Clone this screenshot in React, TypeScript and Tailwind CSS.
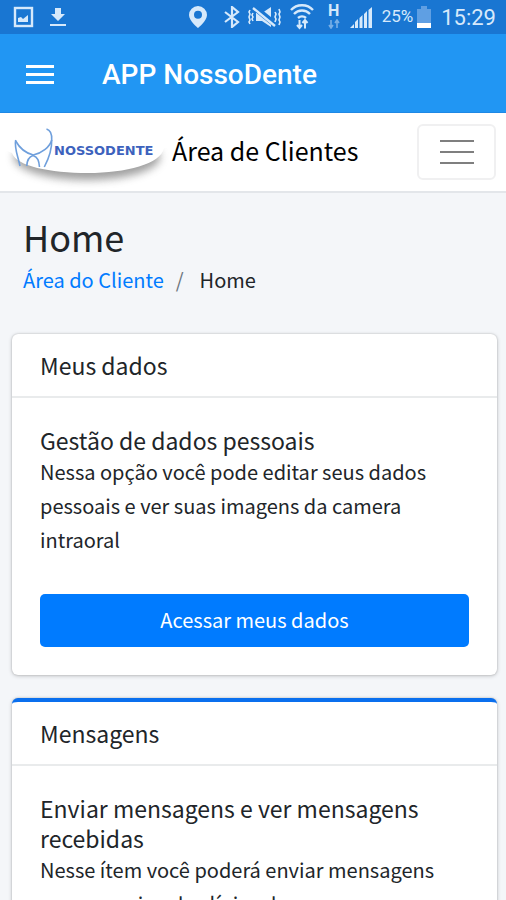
import React from 'react';

interface CardProps {
  title: string;
  accent?: boolean;
  children: React.ReactNode;
}

const Card: React.FC<CardProps> = ({ title, accent, children }) => (
  <section
    className={`rounded-md bg-white shadow-[0_0_2px_rgba(0,0,0,0.2),0_1px_4px_rgba(0,0,0,0.2)] ${
      accent ? 'border-t-4 border-[#0a6fee]' : ''
    }`}
  >
    <header className="border-b-2 border-[#e9ebec] px-7 py-4">
      <h2 className="text-[23px] leading-[30px]">{title}</h2>
    </header>
    <div className="px-7 pt-[27px] pb-7">{children}</div>
  </section>
);

const StatusBar: React.FC = () => (
  <div className="flex h-[34px] shrink-0 items-center justify-between bg-[#1976d2] pr-[10px] pl-3 font-['Roboto',sans-serif] text-[#d6e9fb]">
    <div className="flex items-center gap-4">
      <svg width="22" height="22" viewBox="0 0 22 22" aria-hidden="true">
        <rect x="3" y="2" width="17" height="18" fill="none" stroke="currentColor" strokeWidth="2.4" />
        <path d="M6 16v-4l3-1 2 2 5-4v7z" fill="currentColor" />
      </svg>
      <svg width="16" height="22" viewBox="0 0 16 22" aria-hidden="true">
        <path d="M5 2h6v6h4l-7 7-7-7h4zM0 18h16v2H0z" fill="currentColor" />
      </svg>
    </div>
    <div className="flex items-center gap-2">
      <svg width="20" height="24" viewBox="0 0 20 24" aria-hidden="true">
        <path d="M10 1a9 9 0 0 0-9 9c0 6 9 13 9 13s9-7 9-13a9 9 0 0 0-9-9zm0 4.8a4 4 0 1 1 0 8 4 4 0 0 1 0-8z" fill="currentColor" fillRule="evenodd" />
      </svg>
      <svg width="16" height="22" viewBox="0 0 16 22" className="ml-2" aria-hidden="true">
        <path d="M1 6l13 10-6 5V1l6 5L1 16" fill="none" stroke="currentColor" strokeWidth="2.2" />
      </svg>
      <svg width="34" height="22" viewBox="0 0 34 22" aria-hidden="true">
        <path d="M8 7h6l9-6v20l-9-6H8z" fill="currentColor" />
        <path d="M6 1l22 18" stroke="#1976d2" strokeWidth="6" />
        <path d="M5 2l22 18" stroke="currentColor" strokeWidth="2.4" />
        <path d="M2 4l-1 2 1 2-1 3 1 3-1 2 1 2M5 7l-1 2 1 2-1 2 1 2M27 6l1 2-1 3 1 2-1 3M31 3l1 3-1 2 1 3-1 3 1 2-1 3" fill="none" stroke="currentColor" strokeWidth="1.6" />
      </svg>
      <svg width="24" height="26" viewBox="0 0 24 26" aria-hidden="true">
        <path d="M1 6a15 15 0 0 1 22 0M4 10a11 11 0 0 1 16 0M8 14a6 6 0 0 1 8 0" fill="none" stroke="currentColor" strokeWidth="2.4" />
        <path d="M9.5 16v8M7 21l2.5 3 2.5-3M15 24.5v-8M12.5 19l2.5-3 2.5 3" fill="none" stroke="currentColor" strokeWidth="2" />
      </svg>
      <div className="ml-1 flex w-4 flex-col items-center gap-0.5">
        <span className="text-base leading-3 font-bold">H</span>
        <svg width="12" height="10" viewBox="0 0 12 10" className="opacity-50" aria-hidden="true">
          <path d="M3 1v7M1 6l2 3 2-3M9 9V2M7 4l2-3 2 3" fill="none" stroke="currentColor" strokeWidth="1.6" />
        </svg>
      </div>
      <svg width="24" height="22" viewBox="0 0 24 22" aria-hidden="true">
        <path d="M0 22l4-4v4zM5 22v-6l3-3v9zM9.500 22V12l3-3v13zM14 22V8l3-3v17zM18.500 22V4L22 1v21z" fill="currentColor" />
      </svg>
      <div className="flex items-center gap-1 pr-0.5">
        <span className="text-[17px]">25%</span>
        <svg width="14" height="22" viewBox="0 0 14 22" aria-hidden="true">
          <path d="M4 0h6v3h4v14H0V3h4z" fill="#5f9fe3" />
          <path d="M0 17h14v5H0z" fill="#fff" />
        </svg>
      </div>
      <time className="text-[22px]">15:29</time>
    </div>
  </div>
);

const Logo: React.FC = () => (
  <svg width="160" height="64" viewBox="0 0 160 64" className="overflow-visible" role="img" aria-label="NossoDente">
    <defs>
      <filter id="soft" x="-20%" y="-50%" width="140%" height="220%">
        <feGaussianBlur stdDeviation="4.5" />
      </filter>
    </defs>
    <ellipse cx="79" cy="37" rx="73" ry="23" fill="#777" opacity="0.7" filter="url(#soft)" />
    <path d="M-8 0H164V28H156C153 44 118 53 80 53S8 46 4 33L-8 28z" fill="#fff" />
    <g fill="none" stroke="#6f9fdc" strokeWidth="1.6">
      <path d="M7.7 21C11 27 17 33 25.3 35C34 33 42 27 43.7 20C44 14 42 10 38.5 9" />
      <path d="M7.7 20C6 28 10 36 12 46M43.7 20C44 30 40 40 36.300 47M18.7 46C19 41 20 37 25 35.500C30 37 31 41 31.500 47" />
    </g>
    <text x="46" y="35" fontSize="13" fontWeight="700" fill="#3d62bd" fontFamily="DejaVu Sans, sans-serif">NOSSODENTE</text>
  </svg>
);

const App: React.FC = () => {
  return (
    <div className="flex h-screen flex-col overflow-hidden bg-[#f4f6f9] font-['Noto_Sans_CJK_JP',sans-serif] text-[#212529]">
      <StatusBar />

      <div className="flex h-[79px] shrink-0 items-center gap-12 border-b border-[#1e88e5] bg-[#2196f3] px-[26px] pt-[3px] font-['Roboto',sans-serif] text-white">
        <button type="button" aria-label="Menu" className="flex w-7 flex-col gap-[5px]">
          <span className="h-[3px] w-full bg-white" />
          <span className="h-[3px] w-full bg-white" />
          <span className="h-[3px] w-full bg-white" />
        </button>
        <h1 className="text-[28px] font-medium">APP NossoDente</h1>
      </div>

      <nav className="flex h-20 shrink-0 items-center justify-between border-b-2 border-[#e3e6ea] bg-white pr-[10px] pl-2">
        <a href="#" className="flex items-center gap-1 text-black">
          <Logo />
          <span className="pb-[3px] text-[25px]">Área de Clientes</span>
        </a>
        <button type="button" aria-label="Abrir menu" className="flex h-14 w-[79px] flex-col items-center justify-center gap-[9px] rounded-md border-2 border-[#f0f0f1]">
          <span className="h-0.5 w-[34px] bg-[#7f7f7f]" />
          <span className="h-0.5 w-[34px] bg-[#7f7f7f]" />
          <span className="h-0.5 w-[34px] bg-[#7f7f7f]" />
        </button>
      </nav>

      <div className="px-[23px] pt-5 pb-[34px]">
        <h1 className="text-[36px] leading-[46px]">Home</h1>
        <ol className="flex text-[20px] leading-[41px]">
          <li><a href="#" className="text-[#007bff]">Área do Cliente</a></li>
          <li className="pr-4 pl-3 text-[#6c757d]">/</li>
          <li>Home</li>
        </ol>
      </div>

      <main className="flex flex-col gap-[23px] pr-[9px] pl-3">
        <Card title="Meus dados">
          <h3 className="text-[23px] leading-[30px]">Gestão de dados pessoais</h3>
          <p className="mb-[37px] text-[20px] leading-[34px]">
            Nessa opção você pode editar seus dados pessoais e ver suas imagens da camera intraoral
          </p>
          <button type="button" className="h-[53px] w-full rounded-[5px] bg-[#007bff] pb-0.5 text-[20px] text-white">
            Acessar meus dados
          </button>
        </Card>
        <Card title="Mensagens" accent>
          <h3 className="text-[23px] leading-[30px]">Enviar mensagens e ver mensagens recebidas</h3>
          <p className="text-[20px] leading-[34px]">
            Nesse ítem você poderá enviar mensagens para a equipe da clínica de
          </p>
        </Card>
      </main>
    </div>
  );
};

export default App;
